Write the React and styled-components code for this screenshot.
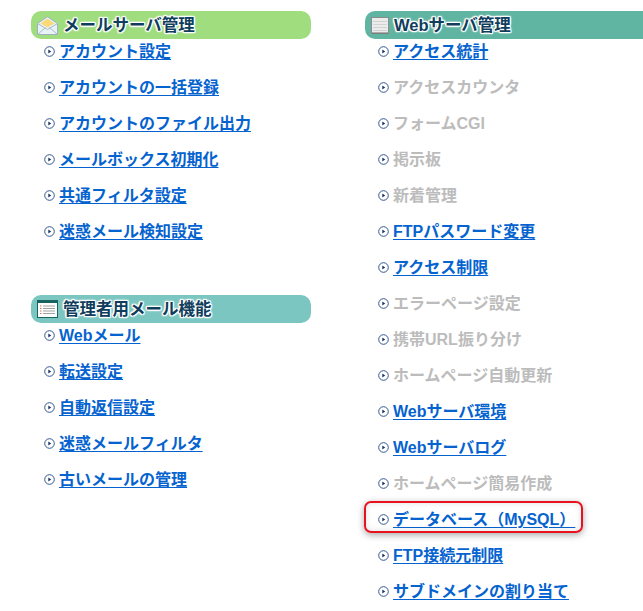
import React from "react";
import styled, { createGlobalStyle } from "styled-components";

const GlobalStyle = createGlobalStyle`
  html, body {
    margin: 0;
    height: 611px;
    overflow: hidden;
    background: #fff;
    font-family: "Liberation Sans", "Noto Sans CJK JP", sans-serif;
  }
`;

const Page = styled.div`
  display: flex;
  align-items: flex-start;
  gap: 54px;
  width: 643px;
  height: 611px;
  padding: 11px 0 0 31px;
  box-sizing: border-box;
  overflow: hidden;
`;

const Column = styled.div`
  display: flex;
  flex-direction: column;
  gap: 52px;
  flex: none;
  width: ${(p) => p.$width}px;
`;

const Section = styled.section`
  display: flex;
  flex-direction: column;
`;

const SectionTitle = styled.h2`
  display: flex;
  align-items: center;
  gap: 5px;
  height: 28px;
  margin: 0;
  padding-left: 6px;
  border-radius: 10px;
  background: ${(p) => p.$bg};
  color: #0f3d5c;
  font-size: 16.5px;
  font-weight: 700;
  text-shadow: 1px 0 1px #fff, -1px 0 1px #fff, 0 1px 1px #fff, 0 -1px 1px #fff,
    1px 1px 1px #fff, -1px -1px 1px #fff, 1px -1px 1px #fff, -1px 1px 1px #fff,
    0 0 3px #fff;
`;

const TitleText = styled.span`
  margin-bottom: 2px;
`;

const MenuList = styled.ul`
  display: flex;
  flex-direction: column;
  gap: 12px;
  margin: 0;
  padding: 0 0 0 13px;
  list-style: none;
`;

const MenuItem = styled.li`
  position: relative;
  display: flex;
  align-items: center;
  gap: 4px;
  width: fit-content;
  height: 24px;
  font-size: 16px;
  font-weight: 700;
  white-space: nowrap;

  ${(p) =>
    p.$highlight &&
    `
    &::after {
      content: "";
      position: absolute;
      top: -6px;
      right: -8px;
      bottom: -2px;
      left: -14px;
      border: 2px solid #e8121f;
      border-radius: 7px;
      box-shadow: 0 2px 7px rgba(0, 0, 0, 0.35), inset 0 0 6px rgba(0, 0, 0, 0.12);
      pointer-events: none;
    }
  `}
`;

const MenuLink = styled.a`
  margin-bottom: 2px;
  color: #0563cf;
  text-decoration: underline;
  text-underline-offset: 2px;
`;

const MenuText = styled.span`
  margin-bottom: 2px;
  color: #bcbcbc;
`;

const Bullet = () => (
  <svg width="11" height="11" viewBox="0 0 11 11" style={{ flex: "none" }}>
    <circle cx="5.5" cy="5.5" r="4.8" fill="#fff" stroke="#34578f" strokeWidth="1" />
    <path d="M4.3 3.4 7.2 5.5 4.3 7.6Z" fill="#1c2f63" />
  </svg>
);

const MailIcon = () => (
  <svg width="21" height="19" viewBox="0 0 21 19" style={{ flex: "none" }}>
    <path d="M.5 7.5 10.5.7l10 6.8v11H.5Z" fill="#e8f2f7" stroke="#9fb2bb" />
    <path d="M3.5 7.5 10.5 2.5l7 5-7 4Z" fill="#fbd977" />
    <path d="M.5 7.5l10 6 10-6" fill="none" stroke="#a9bcc5" />
    <path d="M.5 18.5l8-7M20.5 18.5l-8-7" fill="none" stroke="#a9bcc5" />
  </svg>
);

const BoxIcon = () => (
  <svg width="18" height="17" viewBox="0 0 18 17" style={{ flex: "none" }}>
    <rect x="0.5" y="0.5" width="17" height="16" fill="#ececec" stroke="#8a8a8a" />
    <path d="M2 4.5h14M2 7.5h14M2 10.5h14M2 13.5h14" stroke="#d2d2d2" />
    <path d="M1 16h16" stroke="#6f6f6f" />
  </svg>
);

const ListIcon = () => (
  <svg width="21" height="18" viewBox="0 0 21 18" style={{ flex: "none" }}>
    <rect x="0.5" y="0.5" width="20" height="17" fill="#fff" stroke="#17635f" />
    <rect x="0" y="0" width="21" height="3" fill="#17635f" />
    <path d="M6 6h12M6 8.5h12M6 11h12M6 13.5h12" stroke="#a2a2a2" />
    <path d="M3 6h1.5M3 8.5h1.5M3 11h1.5M3 13.5h1.5" stroke="#d0705a" />
  </svg>
);

const mailAdmin = [
  ["アカウント設定", true],
  ["アカウントの一括登録", true],
  ["アカウントのファイル出力", true],
  ["メールボックス初期化", true],
  ["共通フィルタ設定", true],
  ["迷惑メール検知設定", true],
];

const mailUser = [
  ["Webメール", true],
  ["転送設定", true],
  ["自動返信設定", true],
  ["迷惑メールフィルタ", true],
  ["古いメールの管理", true],
];

const webAdmin = [
  ["アクセス統計", true],
  ["アクセスカウンタ", false],
  ["フォームCGI", false],
  ["掲示板", false],
  ["新着管理", false],
  ["FTPパスワード変更", true],
  ["アクセス制限", true],
  ["エラーページ設定", false],
  ["携帯URL振り分け", false],
  ["ホームページ自動更新", false],
  ["Webサーバ環境", true],
  ["Webサーバログ", true],
  ["ホームページ簡易作成", false],
  ["データベース（MySQL）", true, true],
  ["FTP接続元制限", true],
  ["サブドメインの割り当て", true],
];

const Menu = ({ items }) => (
  <MenuList>
    {items.map(([label, active, highlight]) => (
      <MenuItem key={label} $highlight={highlight}>
        <Bullet />
        {active ? <MenuLink href="#">{label}</MenuLink> : <MenuText>{label}</MenuText>}
      </MenuItem>
    ))}
  </MenuList>
);

export default function App() {
  return (
    <>
      <GlobalStyle />
      <Page>
        <Column $width={280}>
          <Section>
            <SectionTitle $bg="#9fdd7e">
              <MailIcon />
              <TitleText>メールサーバ管理</TitleText>
            </SectionTitle>
            <Menu items={mailAdmin} />
          </Section>
          <Section>
            <SectionTitle $bg="#7cc6c1">
              <ListIcon />
              <TitleText>管理者用メール機能</TitleText>
            </SectionTitle>
            <Menu items={mailUser} />
          </Section>
        </Column>
        <Column $width={290}>
          <Section>
            <SectionTitle $bg="#60b5a2">
              <BoxIcon />
              <TitleText>Webサーバ管理</TitleText>
            </SectionTitle>
            <Menu items={webAdmin} />
          </Section>
        </Column>
      </Page>
    </>
  );
}
